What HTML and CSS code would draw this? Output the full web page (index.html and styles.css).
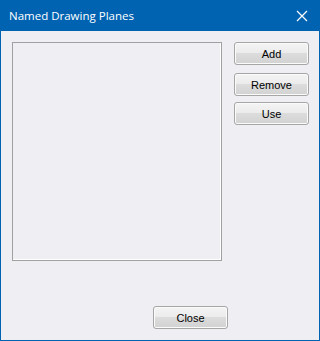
FILE: index.html
```html
<!DOCTYPE html>
<html lang="en">
<head>
    <meta charset="UTF-8">
    <title>Named Drawing Planes</title>
    <link rel="stylesheet" href="styles.css">
</head>
<body>
    <div class="window">
        <div class="titlebar">
            <span class="title">Named Drawing Planes</span>
            <svg class="close-x" width="12" height="12" viewBox="0 0 12 12">
                <path d="M1 1 L11 11 M11 1 L1 11" stroke="#fff" stroke-width="1.2" fill="none"/>
            </svg>
        </div>
        <div class="content">
            <div class="main-row">
                <div class="listbox"></div>
                <div class="side-buttons">
                    <button class="btn">Add</button>
                    <button class="btn">Remove</button>
                    <button class="btn">Use</button>
                </div>
            </div>
            <div class="footer">
                <button class="btn">Close</button>
            </div>
        </div>
    </div>
</body>
</html>
```

FILE: styles.css
```css
body {
    margin: 0;
    padding: 0;
    font-family: 'Liberation Sans', Arial, sans-serif;
}
.window {
    width: 320px;
    height: 341px;
    box-sizing: border-box;
    border: 1px solid #0063b1;
    border-top: none;
    background-color: #efeef3;
    display: flex;
    flex-direction: column;
}
.titlebar {
    height: 31px;
    margin: 0 -1px;
    background-color: #0063b1;
    display: flex;
    align-items: center;
    justify-content: space-between;
    padding: 0 12px 0 9px;
}
.title {
    color: #fff;
    font-family: 'Open Sans', 'Noto Sans', sans-serif;
    font-size: 11.5px;
    padding-bottom: 1px;
}
.close-x {
    display: block;
}
.content {
    flex: 1;
    padding: 11px 0 0 11px;
    display: flex;
    flex-direction: column;
}
.main-row {
    display: flex;
    gap: 12px;
}
.listbox {
    width: 210px;
    height: 219px;
    box-sizing: border-box;
    border: 1px solid #a0a0a0;
    box-shadow: inset -1px -1px 0 #ffffff;
    background-color: #efeef3;
}
.side-buttons {
    display: flex;
    flex-direction: column;
    gap: 6px;
}
.side-buttons .btn:first-child {
    margin-bottom: 2px;
}
.btn {
    width: 75px;
    height: 23px;
    box-sizing: border-box;
    border: 1px solid #a6a6a6;
    border-radius: 3px;
    background: linear-gradient(to bottom, #f4f4f4 0%, #ececec 45%, #dcdcdc 50%, #d2d2d2 100%);
    box-shadow: inset 0 0 0 1px #fbfbfb;
    font-family: 'Liberation Sans', Arial, sans-serif;
    font-size: 11px;
    color: #000;
    padding: 0;
    margin: 0;
}
.footer {
    margin-top: 45px;
    padding-left: 141px;
}
```
